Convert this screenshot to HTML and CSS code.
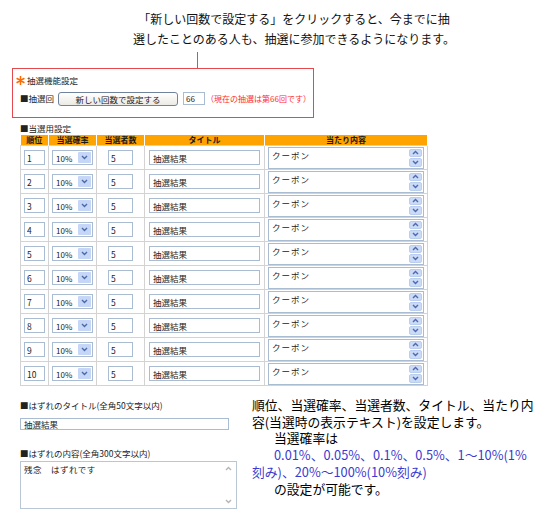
FILE: index.html
```html
<!DOCTYPE html>
<html lang="ja">
<head>
<meta charset="utf-8">
<title>抽選機能設定</title>
<link rel="stylesheet" href="styles.css">
</head>
<body>
<div class="page">
  <p class="callout">「新しい回数で設定する」をクリックすると、今までに抽<br>選したことのある人も、抽選に参加できるようになります。</p>
  <div class="connector"></div>
  <div class="box">
    <div class="box-title">
      <svg class="ast" viewBox="0 0 10 10"><path d="M5 0.6V9.4M1.2 2.8L8.8 7.2M1.2 7.2L8.8 2.8" /></svg>
      <span>抽選機能設定</span>
    </div>
    <div class="box-row">
      <span>■抽選回</span>
      <button class="btn" type="button">新しい回数で設定する</button>
      <input class="num" type="text" value="66">
      <span class="red">（現在の抽選は第66回です）</span>
    </div>
  </div>

  <div class="label sec">■当選用設定</div>
  <table class="grid">
    <colgroup>
      <col class="c1"><col class="c2"><col class="c3"><col class="c4"><col class="c5">
    </colgroup>
    <thead>
      <tr><th>順位</th><th>当選確率</th><th>当選者数</th><th>タイトル</th><th>当たり内容</th></tr>
    </thead>
    <tbody id="rows"></tbody>
  </table>

  <div class="bottom">
    <div class="left">
      <div class="label">■はずれのタイトル(全角50文字以内)</div>
      <input class="lose" type="text" value="抽選結果">
      <div class="label lab2">■はずれの内容(全角300文字以内)</div>
      <div class="ta big">
        <textarea>残念　はずれです</textarea>
        <div class="sb off">
          <svg viewBox="0 0 7 5"><path d="M1 4L3.5 1.5L6 4"/></svg>
          <svg viewBox="0 0 7 5"><path d="M1 1L3.5 3.5L6 1"/></svg>
        </div>
      </div>
    </div>
    <p class="note">順位、当選確率、当選者数、タイトル、当たり内<br>容(当選時の表示テキスト)を設定します。<br><span class="ind"></span>当選確率は<br><span class="ind"></span><span class="blue">0.01%、0.05%、0.1%、0.5%、1〜10%(1%<br>刻み)、20%〜100%(10%刻み)</span><br><span class="ind"></span>の設定が可能です。</p>
  </div>
</div>
<script src="app.js"></script>
</body>
</html>
```

FILE: app.js
```js
var tbody = document.getElementById('rows');
var html = '';
for (var i = 1; i <= 10; i++) {
  html += '<tr>' +
    '<td><input class="in rank" type="text" value="' + i + '"></td>' +
    '<td><div class="in sel"><span class="sv">10%</span><span class="sbtn"><svg viewBox="0 0 7 5"><path d="M1 1L3.5 3.5L6 1"/></svg></span></div></td>' +
    '<td><input class="in cnt" type="text" value="5"></td>' +
    '<td><input class="in ttl" type="text" value="抽選結果"></td>' +
    '<td><div class="in ta"><textarea>クーポン</textarea><div class="sb">' +
      '<span class="b"><svg viewBox="0 0 7 5"><path d="M1 4L3.5 1.5L6 4"/></svg></span>' +
      '<span class="b"><svg viewBox="0 0 7 5"><path d="M1 1L3.5 3.5L6 1"/></svg></span>' +
    '</div></div></td>' +
    '</tr>';
}
tbody.innerHTML = html;
```

FILE: styles.css
```css
* { box-sizing: border-box; }
body {
  margin: 0;
  background: #fff;
  font-family: "Noto Sans CJK JP", "Noto Sans", sans-serif;
  color: #222;
}
.page { width: 550px; }

.callout {
  margin: 0 0 0 128px;
  padding-top: 9px;
  width: 332px;
  text-align: center;
  font-size: 12px;
  line-height: 20px;
  color: #111;
  white-space: nowrap;
}
.connector {
  margin: 3px 0 0 197px;
  width: 1px;
  height: 16px;
  background: #e5484d;
}
.box {
  margin-left: 12px;
  width: 302px;
  height: 50px;
  border: 1px solid #e5484d;
  padding: 6px 0 0 3px;
}
.box-title {
  display: flex;
  align-items: center;
  gap: 2px;
  height: 11px;
  font-size: 8.5px;
  line-height: 11px;
}
.ast { width: 9px; height: 9px; }
.ast path { stroke: #ff6a00; stroke-width: 1.7; stroke-linecap: round; fill: none; }
.box-row {
  display: flex;
  align-items: center;
  height: 15px;
  margin-top: 5px;
  padding-left: 4px;
  font-size: 8.5px;
  line-height: 11px;
  white-space: nowrap;
}
.btn {
  width: 120px;
  height: 14px;
  margin-left: 4px;
  padding: 0;
  border: 1px solid #70839c;
  border-radius: 3px;
  background: linear-gradient(#ffffff, #ebeae4);
  font-family: "Noto Sans CJK JP", sans-serif;
  font-size: 8.5px;
  line-height: 12px;
  color: #222;
}
.num {
  width: 22px;
  height: 13px;
  margin-left: 5px;
  padding: 0 2px;
  border: 1px solid #a9bcd2;
  font-family: "Noto Sans CJK JP", sans-serif;
  font-size: 8px;
  color: #222;
}
.red { color: #ff2a2a; font-size: 8px; margin-left: 1px; }

.label { font-size: 8.5px; line-height: 11px; height: 11px; white-space: nowrap; }
.sec { margin: 5px 0 0 20px; }

.grid {
  margin: 1px 0 0 20px;
  border-collapse: collapse;
  table-layout: fixed;
  width: 407px;
}
.c1 { width: 28px; }
.c2 { width: 48px; }
.c3 { width: 48px; }
.c4 { width: 120px; }
.c5 { width: 163px; }
.grid th {
  background: #ffa300;
  height: 10px;
  padding: 0;
  font-size: 8px;
  line-height: 10px;
  font-weight: bold;
  color: #1a1a1a;
  border-left: 1px solid #fff;
  border-right: 1px solid #fff;
}
.grid th:first-child { border-left: none; }
.grid td {
  border: 1px solid #d3d3d3;
  height: 24px;
  padding: 0;
  text-align: center;
  vertical-align: middle;
  line-height: 0;
}
.in {
  display: block;
  margin: 0 auto;
  height: 15px;
  border: 1px solid #a9bcd2;
  padding: 0 2px;
  font-family: "Noto Sans CJK JP", sans-serif;
  font-size: 8.5px;
  color: #222;
  background: #fff;
  text-align: left;
}
.rank { width: 21px; }
.cnt { width: 25px; }
.ttl { width: 111px; padding-left: 3px; }
.sel {
  width: 41px;
  display: flex;
  align-items: stretch;
  padding: 1px;
}
.sv { flex: 1; font-size: 8px; line-height: 13px; padding-left: 2px; }
.sbtn {
  width: 13px;
  background: #c6d6f7;
  border-radius: 1px;
  display: flex;
  align-items: center;
  justify-content: center;
}
.sbtn svg, .sb svg { width: 7px; height: 5px; }
.sbtn path, .sb path { fill: none; stroke: #4c6aa8; stroke-width: 1.4; }
.ta {
  width: 156px;
  height: 22px;
  display: flex;
  padding: 1px;
}
.ta textarea {
  flex: 1;
  border: none;
  resize: none;
  overflow: hidden;
  padding: 1px 2px;
  margin: 0;
  font-family: "Noto Sans CJK JP", sans-serif;
  font-size: 8.5px;
  line-height: 11px;
  letter-spacing: 1px;
  color: #222;
  background: #fff;
  outline: none;
}
.sb {
  width: 13px;
  display: flex;
  flex-direction: column;
  gap: 1px;
}
.sb .b {
  flex: 1;
  background: #cbdaf6;
  border: 1px solid #bccdef;
  border-radius: 2px;
  display: flex;
  align-items: center;
  justify-content: center;
}

.bottom { display: flex; align-items: flex-start; }
.left { margin-left: 20px; width: 217px; padding-top: 14px; }
.lose {
  display: block;
  width: 209px;
  height: 12px;
  margin-top: 7px;
  padding: 0 3px;
  border: 1px solid #a9bcd2;
  font-family: "Noto Sans CJK JP", sans-serif;
  font-size: 8.5px;
  color: #222;
}
.lab2 { margin-top: 18px; }
.ta.big {
  width: 217px;
  height: 48px;
  margin-top: 2px;
  border: 1px solid #b8c6d6;
}
.big textarea { letter-spacing: 0.5px; }
.sb.off {
  justify-content: space-between;
  align-items: center;
  padding: 3px 0;
}
.sb.off path { stroke: #b5b5b5; }

.note {
  margin: 11px 0 0 15px;
  font-size: 12.8px;
  line-height: 16.7px;
  color: #000;
  white-space: nowrap;
}
.ind { display: inline-block; width: 22px; }
.blue { color: #3a3ad0; }
```
